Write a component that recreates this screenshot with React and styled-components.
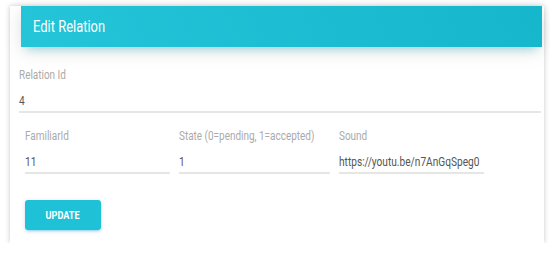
import React from "react";
import styled, { createGlobalStyle } from "styled-components";

const Global = createGlobalStyle`
  html, body { margin: 0; padding: 0; background: #ffffff; overflow: hidden; }
  body { font-family: Roboto, "Liberation Sans", Arial, sans-serif; }
`;

const Page = styled.div`
  padding: 11px 6px 0 10px;
`;

const Card = styled.div`
  background: #fff;
  box-shadow: 0 0 5px rgba(0, 0, 0, 0.22);
  padding-bottom: 13px;
`;

const CardHeader = styled.div`
  margin: -5px 2px 0 11px;
  height: 41px;
  padding: 0 12px;
  display: flex;
  align-items: center;
  background: linear-gradient(60deg, #24c4d9, #16b6cc);
  box-shadow: 0 4px 20px 0 rgba(0, 0, 0, 0.1), 0 7px 10px -5px rgba(0, 172, 193, 0.35);
`;

const Narrow = styled.span`
  display: inline-block;
  white-space: nowrap;
  transform: scaleX(${(p) => p.$scale || 0.83});
  transform-origin: ${(p) => (p.$center ? "center" : "left")} center;
`;

const Title = styled.h4`
  margin: 0;
  color: #fff;
  font-size: 16px;
  line-height: 20px;
  font-weight: 400;
`;

const Body = styled.div`
  padding: 21px 3px 0 9px;
`;

const Field = styled.div`
  display: flex;
  flex-direction: column;
  min-width: 0;
`;

const Label = styled.label`
  font-size: 12px;
  line-height: 15px;
  color: #aaaaaa;
  font-weight: 400;
  white-space: nowrap;
`;

const Value = styled.div`
  margin-top: 10px;
  font-size: 13px;
  line-height: 16px;
  color: #555555;
  padding-bottom: 2px;
  border-bottom: 2px solid #e6e6e6;
  white-space: nowrap;
`;

const Row = styled.div`
  display: grid;
  grid-template-columns: 145px 151px 145px;
  column-gap: 9px;
  padding-left: 6px;
  margin-top: 16px;
`;

const Button = styled.button`
  display: block;
  margin: 26px 0 0 6px;
  padding: 0;
  width: 76px;
  height: 30px;
  border: none;
  border-radius: 3px;
  background: #1fc1d6;
  color: #fff;
  font-family: Roboto, "Liberation Sans", Arial, sans-serif;
  font-size: 11px;
  font-weight: 700;
  box-shadow: 0 2px 2px 0 rgba(0, 188, 212, 0.14), 0 3px 1px -2px rgba(0, 188, 212, 0.2),
    0 1px 5px 0 rgba(120, 80, 200, 0.18);
  cursor: pointer;
`;

export default function App() {
  return (
    <>
      <Global />
      <Page>
        <Card>
          <CardHeader>
            <Title>
              <Narrow $scale={0.81}>Edit Relation</Narrow>
            </Title>
          </CardHeader>
          <Body>
            <Field>
              <Label>
                <Narrow>Relation Id</Narrow>
              </Label>
              <Value>
                <Narrow $scale={0.78}>4</Narrow>
              </Value>
            </Field>
            <Row>
              <Field>
                <Label>
                  <Narrow>FamiliarId</Narrow>
                </Label>
                <Value>
                  <Narrow $scale={0.78}>11</Narrow>
                </Value>
              </Field>
              <Field>
                <Label>
                  <Narrow>State (0=pending, 1=accepted)</Narrow>
                </Label>
                <Value>
                  <Narrow $scale={0.78}>1</Narrow>
                </Value>
              </Field>
              <Field>
                <Label>
                  <Narrow>Sound</Narrow>
                </Label>
                <Value>
                  <Narrow $scale={0.78}>https://youtu.be/n7AnGqSpeg0</Narrow>
                </Value>
              </Field>
            </Row>
            <Button>
              <Narrow $center>UPDATE</Narrow>
            </Button>
          </Body>
        </Card>
      </Page>
    </>
  );
}
